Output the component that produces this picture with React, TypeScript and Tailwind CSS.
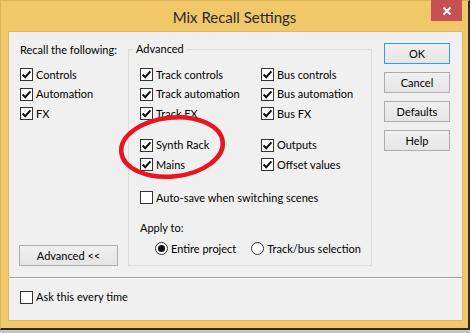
import type { ReactNode } from 'react'

const font = { fontFamily: 'Lato, "Liberation Sans", sans-serif' }

function Check({ on = true }: { on?: boolean }) {
	return <span className="w-[13px] h-[13px] shrink-0 border border-[#333] bg-white flex items-center justify-center">
		{on ? <svg width="11" height="11" viewBox="0 0 11 11">
			<path d="M1.6 5.6 L4.2 8.2 L9.4 2.4" fill="none" stroke="#111" strokeWidth="2.1" />
		</svg> : null}
	</span>
}

function Row({ label, on = true, className = '' }: { label: string, on?: boolean, className?: string }) {
	return <div className={`flex items-center gap-[3px] h-[19.5px] ${className}`}>
		<Check on={on} />
		<span className="leading-[16px] whitespace-nowrap">{label}</span>
	</div>
}

function Radio({ label, on }: { label: string, on?: boolean }) {
	return <div className="flex items-center gap-[3px] h-[20px]">
		<span className="w-[13px] h-[13px] rounded-full border border-[#333] bg-white flex items-center justify-center">
			{on ? <span className="w-[7px] h-[7px] rounded-full bg-[#111]" /> : null}
		</span>
		<span className="leading-[16px] whitespace-nowrap">{label}</span>
	</div>
}

function Btn({ children, main = false, className = '' }: { children: ReactNode, main?: boolean, className?: string }) {
	return <button className={`h-[21px] border ${main ? 'border-[#3399ff]' : 'border-[#adadad]'} bg-linear-to-b from-[#f0f0f0] to-[#e5e5e5] text-black leading-[16px] ${className}`}>
		{children}
	</button>
}

export default function App() {
	return <div className="w-[472px] h-[333px] bg-white relative overflow-hidden text-[11px] text-black" style={font}>
		<div className="w-[470px] h-[330px] bg-[#f0c86a] border-l border-t border-[#dcb35c] border-r-2 border-b-2 border-r-[#2b2b2b] border-b-[#2b2b2b] flex flex-col">
			{/* title bar */}
			<div className="h-[30px] relative flex items-center justify-center">
				<span className="text-[15px] text-[#2a2a2a] leading-[20px] mt-[1px]">Mix Recall Settings</span>
				<div className="absolute right-[6px] top-[-1px] w-[31px] h-[21px] bg-[#c75050] flex items-center justify-center">
					<svg width="10" height="10" viewBox="0 0 10 10">
						<path d="M1.5 1.5 L8.5 8.5 M8.5 1.5 L1.5 8.5" stroke="white" strokeWidth="2" />
					</svg>
				</div>
			</div>

			{/* client */}
			<div className="ml-[7px] w-[455px] h-[290px] bg-[#f0f0f0] border border-[#dcb766] flex flex-col">
				<div className="flex items-start pl-[10px] pt-[10px]">
					<div className="w-[99px] h-[224px] flex flex-col">
						<p className="leading-[16px] pl-[1px] whitespace-nowrap">Recall the following:</p>
						<div className="mt-[7px] pl-[1px]">
							<Row label="Controls" />
							<Row label="Automation" />
							<Row label="FX" />
						</div>
						<Btn className="mt-auto w-[99px] h-[20px]">Advanced &lt;&lt;</Btn>
					</div>

					<div className="ml-[10px] mt-[7px] w-[244px] h-[217px] border border-[#dcdcdc] pl-[11px]">
						<span className="block w-max -mt-[9px] -ml-[7px] px-[3px] bg-[#f0f0f0] leading-[16px]">Advanced</span>
						<div className="grid grid-cols-[121px_1fr] mt-[8px]">
							<Row label="Track controls" />
							<Row label="Bus controls" />
							<Row label="Track automation" />
							<Row label="Bus automation" />
							<Row label="Track FX" />
							<Row label="Bus FX" />
							<Row label="Synth Rack" className="mt-[12px]" />
							<Row label="Outputs" className="mt-[12px]" />
							<Row label="Mains" />
							<Row label="Offset values" />
						</div>
						<Row label="Auto-save when switching scenes" on={false} className="mt-[13px] h-[20px]" />
						<p className="mt-[12px] leading-[16px]">Apply to:</p>
						<div className="mt-[3px] pl-[15px] flex gap-[15px]">
							<Radio label="Entire project" on />
							<Radio label="Track/bus selection" />
						</div>
					</div>

					<div className="ml-[12px] mt-[1px] w-[66px] flex flex-col gap-[8px]">
						<Btn main>OK</Btn>
						<Btn>Cancel</Btn>
						<Btn>Defaults</Btn>
						<Btn>Help</Btn>
					</div>
				</div>

				<div className="mt-[11px] border-t border-t-[#a0a0a0] border-b border-b-white" />
				<div className="mt-[8px] pl-[11px]">
					<Row label="Ask this every time" on={false} className="h-[20px]" />
				</div>
			</div>
		</div>
		<div className="w-[470px] h-[3px] bg-[#c4c4c4]" />

		{/* red annotation */}
		<svg className="absolute left-0 top-0 pointer-events-none" width="472" height="333">
			<ellipse cx="172" cy="147" rx="51" ry="29.5" transform="rotate(-6 172 147)" fill="none" stroke="#e8141e" strokeWidth="4.5" />
		</svg>
	</div>
}
